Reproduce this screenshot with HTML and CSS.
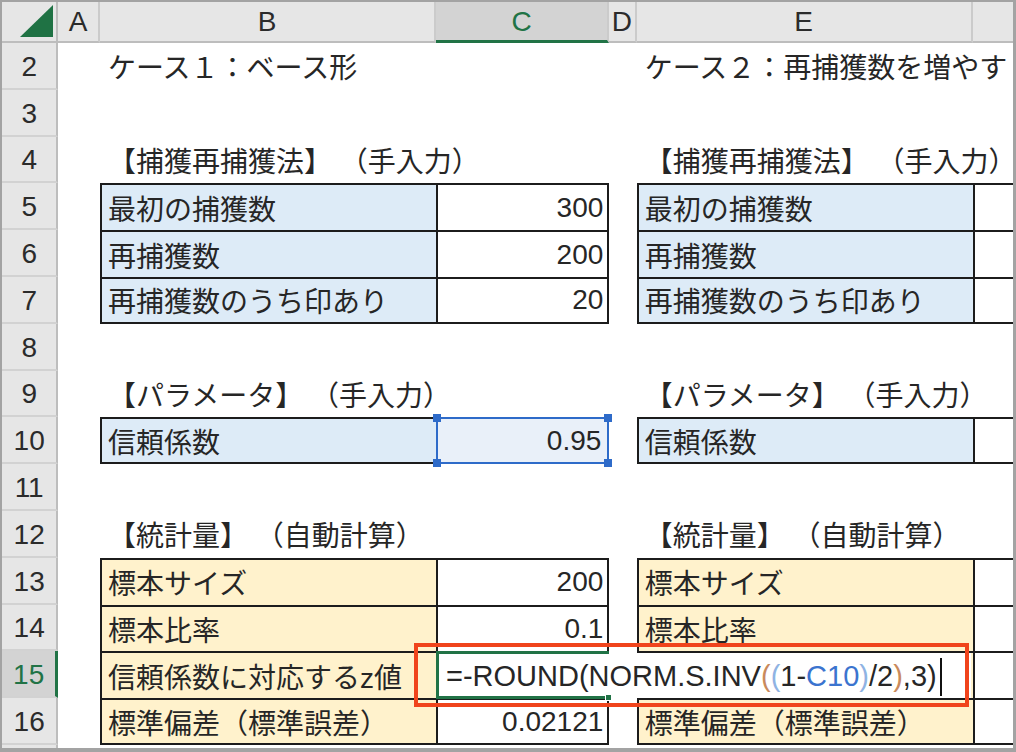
FILE: index.html
```html
<!DOCTYPE html>
<html lang="ja">
<head>
<meta charset="utf-8">
<title>捕獲再捕獲法 - 標本調査</title>
<link rel="stylesheet" href="styles.css">
</head>
<body>
<div class="sheet">
  <div class="row head">
    <div class="corner">
      <svg class="select-all" width="54" height="39" viewBox="0 0 54 39"><polygon points="18,35 51,35 51,3" fill="#1f7244"/></svg>
    </div>
    <div class="ch">A</div>
    <div class="ch">B</div>
    <div class="ch sel">C</div>
    <div class="ch">D</div>
    <div class="ch">E</div>
    <div class="ch last"></div>
  </div>

  <div class="row">
    <div class="rh">2</div>
    <div class="c"></div>
    <div class="c">ケース１：ベース形</div>
    <div class="c"></div>
    <div class="c"></div>
    <div class="c">ケース２：再捕獲数を増やす</div>
    <div class="c"></div>
  </div>

  <div class="row">
    <div class="rh">3</div>
    <div class="c"></div><div class="c"></div><div class="c"></div><div class="c"></div><div class="c"></div><div class="c"></div>
  </div>

  <div class="row">
    <div class="rh">4</div>
    <div class="c"></div>
    <div class="c">【捕獲再捕獲法】 （手入力）</div>
    <div class="c"></div>
    <div class="c"></div>
    <div class="c">【捕獲再捕獲法】 （手入力）</div>
    <div class="c"></div>
  </div>

  <div class="row">
    <div class="rh">5</div>
    <div class="c"></div>
    <div class="c lb">最初の捕獲数</div>
    <div class="c v">300</div>
    <div class="c"></div>
    <div class="c lb">最初の捕獲数</div>
    <div class="c v cut"></div>
  </div>

  <div class="row">
    <div class="rh">6</div>
    <div class="c"></div>
    <div class="c lb">再捕獲数</div>
    <div class="c v">200</div>
    <div class="c"></div>
    <div class="c lb">再捕獲数</div>
    <div class="c v cut"></div>
  </div>

  <div class="row">
    <div class="rh">7</div>
    <div class="c"></div>
    <div class="c lb end">再捕獲数のうち印あり</div>
    <div class="c v end">20</div>
    <div class="c"></div>
    <div class="c lb end">再捕獲数のうち印あり</div>
    <div class="c v cut end"></div>
  </div>

  <div class="row">
    <div class="rh">8</div>
    <div class="c"></div><div class="c"></div><div class="c"></div><div class="c"></div><div class="c"></div><div class="c"></div>
  </div>

  <div class="row">
    <div class="rh">9</div>
    <div class="c"></div>
    <div class="c">【パラメータ】 （手入力）</div>
    <div class="c"></div>
    <div class="c"></div>
    <div class="c">【パラメータ】 （手入力）</div>
    <div class="c"></div>
  </div>

  <div class="row">
    <div class="rh">10</div>
    <div class="c"></div>
    <div class="c lb end">信頼係数</div>
    <div class="c v end referenced">0.95
      <div class="ref-box"><span class="knob k-tl"></span><span class="knob k-tr"></span><span class="knob k-bl"></span><span class="knob k-br"></span></div>
    </div>
    <div class="c"></div>
    <div class="c lb end">信頼係数</div>
    <div class="c v cut end"></div>
  </div>

  <div class="row">
    <div class="rh">11</div>
    <div class="c"></div><div class="c"></div><div class="c"></div><div class="c"></div><div class="c"></div><div class="c"></div>
  </div>

  <div class="row">
    <div class="rh">12</div>
    <div class="c"></div>
    <div class="c">【統計量】 （自動計算）</div>
    <div class="c"></div>
    <div class="c"></div>
    <div class="c">【統計量】 （自動計算）</div>
    <div class="c"></div>
  </div>

  <div class="row">
    <div class="rh">13</div>
    <div class="c"></div>
    <div class="c lo">標本サイズ</div>
    <div class="c v">200</div>
    <div class="c"></div>
    <div class="c lo">標本サイズ</div>
    <div class="c v cut"></div>
  </div>

  <div class="row">
    <div class="rh">14</div>
    <div class="c"></div>
    <div class="c lo">標本比率</div>
    <div class="c v">0.1</div>
    <div class="c"></div>
    <div class="c lo">標本比率</div>
    <div class="c v cut"></div>
  </div>

  <div class="row">
    <div class="rh sel">15</div>
    <div class="c"></div>
    <div class="c lo">信頼係数に対応するz値</div>
    <div class="c v editing">
      <div class="editor">
        <span class="formula">=-ROUND(NORM.S.INV<span class="p1">(</span><span class="p2">(</span>1-<span class="ref">C10</span><span class="p2">)</span>/2<span class="p1">)</span>,3)</span><span class="caret"></span>
      </div>
      <div class="active-cell"><span class="fill-handle"></span></div>
    </div>
    <div class="c"></div>
    <div class="c lo"></div>
    <div class="c v cut"></div>
  </div>

  <div class="row">
    <div class="rh">16</div>
    <div class="c"></div>
    <div class="c lo end">標準偏差（標準誤差）</div>
    <div class="c v end">0.02121</div>
    <div class="c"></div>
    <div class="c lo end">標準偏差（標準誤差）</div>
    <div class="c v cut end"></div>
  </div>

  <div class="row tail">
    <div class="rh"></div>
    <div class="c"></div><div class="c"></div><div class="c"></div><div class="c"></div><div class="c"></div><div class="c"></div>
  </div>

  <div class="callout"></div>
</div>
</body>
</html>
```

FILE: styles.css
```css
* { box-sizing: border-box; }

html, body {
  margin: 0;
  padding: 0;
  background: #fff;
}

body {
  width: 1016px;
  height: 752px;
  overflow: hidden;
}

/* worksheet frame */
.sheet {
  position: relative;
  width: 1016px;
  height: 752px;
  border-style: solid;
  border-color: #a3a3a3;
  border-width: 2px 3px 4px 2px;
  background: #fff;
  font-family: "Liberation Sans", "Noto Sans CJK JP", sans-serif;
  font-size: 28px;
  color: #262626;
  overflow: hidden;
}

.row {
  display: grid;
  grid-template-columns: 56.33px 41.67px 336px 173.33px 27.33px 336px 40.33px;
  height: 46.8px;
}

.row.head { height: 41px; }
.row.tail { height: 3px; }

/* column headers */
.corner {
  background: #e6e6e6;
  border-right: 2px solid #bdbdbd;
  border-bottom: 2px solid #bdbdbd;
}

.select-all { display: block; }

.ch {
  display: flex;
  align-items: center;
  justify-content: center;
  background: #e6e6e6;
  border-right: 2px solid #cbcbcb;
  border-bottom: 2px solid #bdbdbd;
  color: #2b2b2b;
  padding-top: 1px;
}

.ch.last { border-right: 0; }

.ch.sel {
  background: #d3d3d3;
  color: #217346;
  border-bottom: 3px solid #217346;
}

/* row headers */
.rh {
  display: flex;
  align-items: center;
  justify-content: center;
  background: #e6e6e6;
  border-right: 2px solid #bdbdbd;
  border-bottom: 2px solid #d2d2d2;
  color: #2b2b2b;
  padding-top: 3px;
}

.rh.sel {
  background: #d3d3d3;
  color: #217346;
  border-right: 3px solid #217346;
}

/* cells */
.c {
  display: flex;
  align-items: center;
  min-width: 0;
  padding: 0 8px;
  white-space: nowrap;
}

.lb, .lo, .v {
  border-top: 2px solid #1c1c1c;
  border-left: 2px solid #1c1c1c;
}

.lb { background: #ddebf7; padding-left: 6px; }
.lo { background: #fff2cc; padding-left: 6px; }

.v {
  position: relative;
  justify-content: flex-end;
  padding-right: 4px;
  background: #fff;
  border-right: 2px solid #1c1c1c;
}

.v.cut { border-right: 0; }

.end { border-bottom: 2px solid #1c1c1c; }

/* cell referenced by the formula being edited */
.v.referenced {
  background: #e9f0f9;
  padding-right: 6px;
}

.ref-box {
  position: absolute;
  left: -2px;
  top: -2px;
  right: -2px;
  bottom: -2px;
  border: 2px solid #2e6bc9;
}

.knob {
  position: absolute;
  width: 8px;
  height: 8px;
  background: #2e6bc9;
}

.k-tl { left: -5px; top: -5px; }
.k-tr { right: -5px; top: -5px; }
.k-bl { left: -5px; bottom: -5px; }
.k-br { right: -5px; bottom: -5px; }

/* in-cell editor */
.editor {
  position: absolute;
  left: -2px;
  top: 0;
  bottom: 0;
  width: 535px;
  z-index: 2;
  display: flex;
  align-items: center;
  padding: 2px 0 0 10px;
  background: #fff;
  color: #262626;
  font-size: 29px;
}

.formula { white-space: nowrap; }

.p1 { color: #c98a5c; }
.p2 { color: #8fb3e3; }
.ref { color: #3b74cf; }

.caret {
  display: inline-block;
  width: 2px;
  height: 38px;
  margin-left: 3px;
  background: #111;
}

.active-cell {
  position: absolute;
  left: -2px;
  top: -2px;
  width: 173.33px;
  bottom: -1px;
  z-index: 3;
  border-style: solid;
  border-color: #217346;
  border-width: 3px 0 3px 3px;
}

.fill-handle {
  position: absolute;
  right: -3px;
  bottom: -5px;
  width: 7px;
  height: 7px;
  background: #217346;
  border: 1px solid #fff;
}

/* annotation frame around the edited formula */
.callout {
  position: absolute;
  left: 412px;
  top: 641px;
  width: 555px;
  height: 64px;
  border: 4px solid #f0441c;
  z-index: 4;
}
```
